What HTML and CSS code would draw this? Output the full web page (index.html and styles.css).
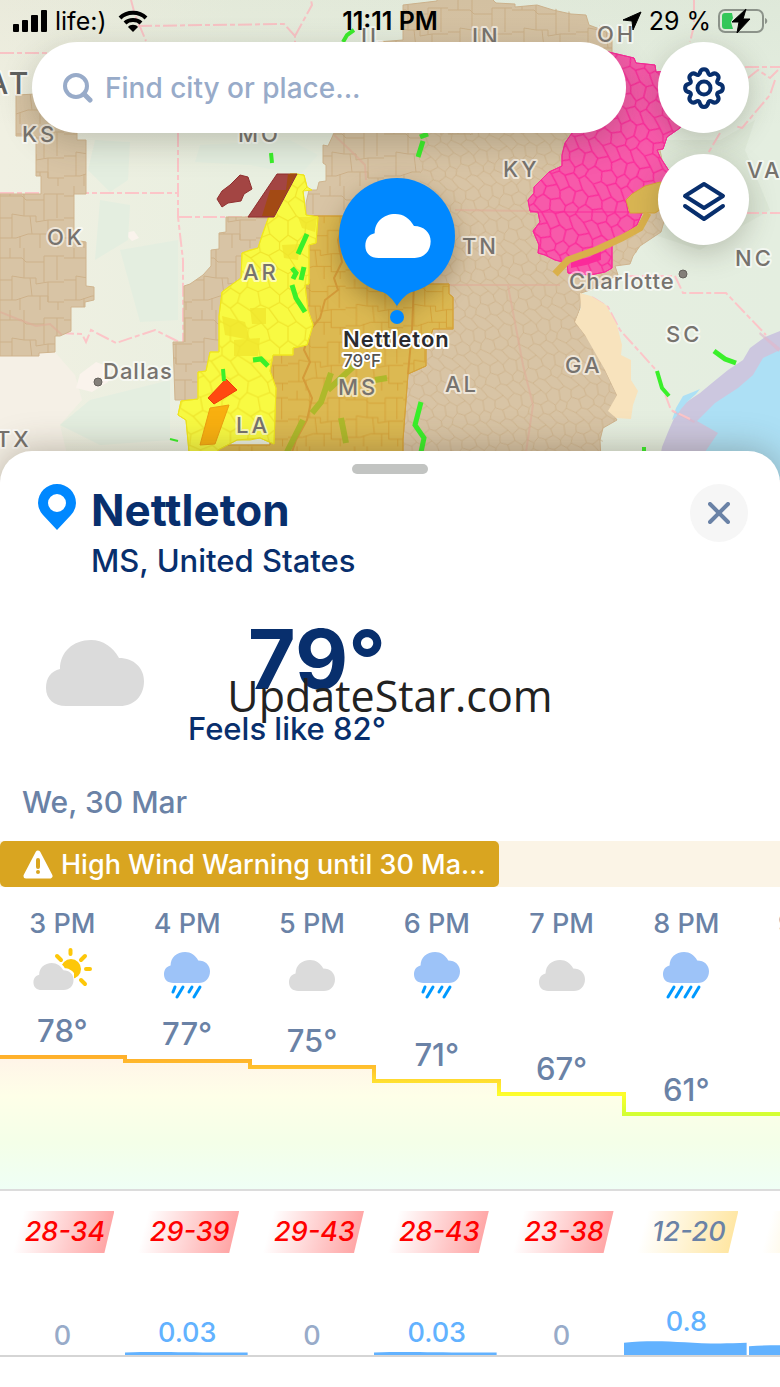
FILE: index.html
```html
<!DOCTYPE html>
<html lang="en">
<head>
    <meta charset="UTF-8">
    <meta name="viewport" content="width=device-width, initial-scale=1.0">
    <title>Nettleton Weather</title>
    <link rel="stylesheet" href="styles.css">
</head>
<body>
    <!-- Shared icon shapes -->
    <svg class="defs" aria-hidden="true">
        <symbol id="cloud" viewBox="0 0 98 66">
            <path d="M20 66C8 66 0 59 0 48C0 38 5 31 14 29C14 12 27 0 45 0C57 0 67 7 73 18C88 18 98 28 98 41C98 56 88 66 74 66Z"/>
        </symbol>
        <symbol id="cloudy" viewBox="0 0 64 54">
            <use href="#cloud" x="9" y="14" width="46" height="31" fill="#dbdbdb"/>
        </symbol>
        <symbol id="partly" viewBox="0 0 64 54">
            <circle cx="41" cy="23" r="10" fill="#fdc709"/>
            <path d="M40.500 4V8M27 10L31 14M55 10L51 14M56 23H60M51 34L55 38" stroke="#fdc709" stroke-width="4" stroke-linecap="round"/>
            <use href="#cloud" x="3" y="17" width="41" height="27" fill="#dbdbdb" stroke="#fff" stroke-width="12" paint-order="stroke"/>
        </symbol>
        <symbol id="rain" viewBox="0 0 64 54">
            <use href="#cloud" x="9" y="6" width="46" height="31" fill="#9dc3f8"/>
            <path d="M20 41L18 46M28 41L22 51M37 41L34 46M45 41L39 51" stroke="#0099ff" stroke-width="3" stroke-linecap="round"/>
        </symbol>
        <symbol id="heavy-rain" viewBox="0 0 64 54">
            <use href="#cloud" x="9" y="6" width="46" height="31" fill="#9dc3f8"/>
            <path d="M20 41L14 51M28 41L22 51M37 41L31 51M45 41L39 51" stroke="#0099ff" stroke-width="3" stroke-linecap="round"/>
        </symbol>
        <symbol id="rain-bar" viewBox="0 0 123 15" preserveAspectRatio="none">
            <path d="M0 2C45 -3 65 5 123 2V15H0Z"/>
        </symbol>
    </svg>

    <header class="map">
        <svg class="map-canvas" viewBox="0 0 780 480" preserveAspectRatio="xMidYMin slice" role="img" aria-label="Warnings map">
            <defs>
                <!-- County outlines, one tile shape and a colour per area -->
                <path id="cells" d="M0 8L7 4L15 10L26 5L31 11L40 4L48 8M0 20L8 25L14 19L23 23L33 19L41 26L48 20M0 37L6 32L17 39L25 34L32 37L41 32L48 37M15 10L14 19M31 11L33 19M0 8V20M48 8V20M8 25L6 32M23 23L25 34M41 26L41 32M17 39L26 49M17 -5L26 5M0 37L7 48M0 -7L7 4M32 37L40 48M32 -7L40 4" fill="none"/>
                <path id="grid" d="M0 10H22L26 14H44V8H64M0 32H12V28L24 30H36V36L48 34H64M0 52H16L28 48H48V54H64M10 0V10M24 0V30M44 14V34M57 8V32M12 32V52M30 30L32 48M48 34V54M20 50V62M40 48V62M58 54V62" fill="none"/>
                <pattern id="tan-cells" width="48" height="44" patternUnits="userSpaceOnUse" patternTransform="rotate(-8) scale(.8)"><use href="#cells" stroke="#cdb18a"/></pattern>
                <pattern id="yellow-cells" width="48" height="44" patternUnits="userSpaceOnUse" patternTransform="scale(1.200)"><use href="#cells" stroke="#efe52c"/></pattern>
                <pattern id="pink-cells" width="48" height="44" patternUnits="userSpaceOnUse" patternTransform="rotate(14) scale(.9)"><use href="#cells" stroke="#fb2a9a" stroke-width="1.500"/></pattern>
                <pattern id="tan-grid" width="64" height="62" patternUnits="userSpaceOnUse"><use href="#grid" stroke="#cdb18a"/></pattern>
                <pattern id="gold-grid" width="64" height="62" patternUnits="userSpaceOnUse" patternTransform="scale(.9)"><use href="#grid" stroke="#d5a136"/></pattern>
                <linearGradient id="land" x1="0" y1="0" x2="1" y2="0">
                    <stop offset="0" stop-color="#f0f0e2"/>
                    <stop offset=".3" stop-color="#e9efe0"/>
                    <stop offset="1" stop-color="#e4eee0"/>
                </linearGradient>
                <linearGradient id="top-shade" x1="0" y1="0" x2="0" y2="1">
                    <stop offset="0" stop-color="#5a6440" stop-opacity=".04"/>
                    <stop offset="1" stop-color="#5a6440" stop-opacity="0"/>
                </linearGradient>
            </defs>

            <rect width="780" height="480" fill="url(#land)"/>
            <path fill="#f5f0e6" d="M0 356L55 352L75 375L82 400L60 425L66 450V480H0Z"/>
            <path fill="#faf3ec" d="M80 374L96 362L112 368L108 382L92 392L76 388ZM124 233L134 231L139 238L132 241Z"/>
            <path fill="#e4eee0" d="M95 140L130 142L128 180L110 192L88 170ZM200 145L290 140L318 155L300 175L250 165L195 162ZM100 200L130 205L128 240L95 260ZM120 250L178 240V320L140 322ZM90 400L170 380V440L100 445L60 425Z"/>
            <path fill="#d9e5d2" d="M660 140L720 140L755 120L745 150L770 210L700 250L640 230Z" opacity=".6"/>

            <!-- Sea -->
            <path fill="#ccc7df" d="M780 331L765 337L750 348L743 360L728 370L712 383L700 393L685 403L675 416L668 432L662 447L656 480H780Z"/>
            <path fill="#ade0f5" d="M780 350L763 358L753 375L738 388L715 403L697 421L718 433L705 452L700 480H780Z"/>
            <path fill="#ade0f5" d="M683 396L693 392L700 389L696 394L687 402L681 409L676 417L672 420L676 408Z"/>
            <path fill="#e3b6ca" d="M780 348L760 332L759 334L779 352ZM695 421L672 410V412L694 423Z" opacity=".6"/>

            <!-- State borders -->
            <g fill="none" stroke="#fcc5c8" stroke-width="2" stroke-dasharray="14 3 5 3">
                <path d="M0 53H48M131 0L135 15L146 41M138 26L284 24L295 36V42M295 36L312 5L311 0M178 133V217L183 260V343M0 193H178M178 217H248"/>
                <path d="M60 333L82 334L86 342L91 330L116 343L155 330L183 344"/>
                <path d="M694 0V26L690 42M745 67H780M748 78L758 70L770 78L778 70M775 80L770 95L742 128L735 126M720 133L707 155M745 213H780"/>
                <path d="M592 297L608 307L620 330L656 370L671 410L690 419M625 276H675L683 293H726L766 335"/>
            </g>

            <!-- Advisory areas -->
            <g fill="#d8c4a5" stroke="#d0b48e">
                <path id="west" d="M16 95L77 92V140H86V194H74V240L86 242V286L94 287V300L85 302V307H71V331L60 336H55V352L39 353V356H0V194H41V176H36V136H16Z"/>
                <path id="middle" d="M226 217H280V400H175L173 342H184V286L190 284L203 275L211 266V250L219 249V233L226 232Z"/>
                <path d="M378 42L403 40V5L437 1V-2H491L496 3L515 4V7L537 5L553 10L571 14L586 15L589 25L597 28L612 35V55L650 100L670 200L661 232L640 246L633 256L630 264L615 266L618 275L590 290L581 293L580 308L575 322L585 335L597 350L605 370L612 385L617 395L610 410L617 420L603 428L600 440L602 480H390L306 240V203L309 190H317L319 182L326 181V165L323 163V145L328 146L334 133Z"/>
            </g>
            <g fill="url(#tan-grid)">
                <path d="M16 95L77 92V140H86V194H74V240L86 242V286L94 287V300L85 302V307H71V331L60 336H55V352L39 353V356H0V194H41V176H36V136H16Z"/>
                <path d="M226 217H280V400H175L173 342H184V286L190 284L203 275L211 266V250L219 249V233L226 232Z"/>
                <path d="M378 42L403 40V5L437 1V-2H491L515 4V7L537 5L586 15L612 35V60L480 135H420V200L306 215V203L309 190H317L319 182L326 181V165L323 163V145L334 133Z"/>
                <path fill="url(#tan-cells)" d="M420 135L650 100L661 232L640 246L630 264L615 266L618 275L590 290L581 293L575 322L597 350L617 395L610 410L617 420L603 428L602 480H390V210H420Z"/>
            </g>
            <path fill="none" stroke="#dfae98" stroke-width="2" opacity=".6" d="M455 210L530 211M440 285H560M508 286L523 365L533 405L526 452M334 135L350 150L365 165L366 180M0 312L20 320L36 326L50 324L62 335"/>

            <g stroke="#d6a33a">
                <path fill="#dcb952" d="M280 216H343L390 284H449V294L453 297V329H433L426 350V366L408 374L403 440V480H216V445H270V340Z"/>
                <path fill="url(#gold-grid)" d="M280 216H343L390 284H449V294L453 297V329H433L426 350V366L408 374L403 440V480H216V445H270V340Z"/>
            </g>
            <path fill="none" stroke="#d49b39" stroke-width="2" d="M344 222L338 240L342 262L334 278L338 290L325 300L320 318L310 330L304 350L310 362L303 378L312 398L307 420L296 440L292 452M414 284L412 330L408 374"/>

            <g stroke="#f0e51e">
                <path fill="#f8fa42" d="M290 174H296L304 175L307 187L312 190L303 191L306 215L318 217L316 243L309 245V284L305 285L308 310L313 325L307 345L293 348V355H273L270 371L276 388L274 444L260 438L250 440H237L218 450L217 480H189V452L186 420L178 415L181 401L198 399V372L206 371L210 352H219V316L222 292L227 288L241 278L242 253L250 250L258 248L262 235L268 219L278 195Z"/>
                <path fill="#f2ea31" stroke="none" d="M222 316L245 322L250 340L225 335ZM250 308H266V324H252ZM234 340L260 338L258 356H234ZM282 245L300 244L298 260L284 258ZM298 217H317L315 232L302 228Z"/>
                <path fill="url(#yellow-cells)" d="M290 174H296L304 175L307 187L303 191L306 215L318 217L316 243L309 245V284L305 285L308 310L313 325L307 345L293 348V355H273L270 371L276 388L274 444L260 438L237 440L218 450L217 480H189V452L186 420L178 415L181 401L198 399V372L206 371L210 352H219V316L222 292L241 278L242 253L258 248L268 219L278 195Z"/>
            </g>

            <g stroke="#fb2a9a">
                <path fill="#f75aaa" d="M600 50L634 58L636 63L655 65L656 72L668 71L690 100L680 128L667 137L663 149L657 150L660 157L675 180L640 190L626 200L628 212L642 213L637 225L612 242V268L605 272L590 275L568 273L567 263L555 260L545 255L538 253L539 245L533 231L540 222L538 212L530 211L528 200L534 193V187L549 172L562 166V155L565 143L572 133L600 120Z"/>
                <path fill="url(#pink-cells)" d="M600 50L634 58L636 63L655 65L656 72L668 71L690 100L680 128L667 137L663 149L657 150L660 157L675 180L640 190L626 200L628 212L642 213L637 225L612 242V268L605 272L590 275L568 273L567 263L555 260L545 255L538 253L539 245L533 231L540 222L538 212L530 211L528 200L534 193V187L549 172L562 166V155L565 143L572 133L600 120Z"/>
                <path fill="none" d="M530 212H628"/>
                <path fill="#fb2a9a" stroke="none" d="M571 262L590 257L601 250V260L586 265L571 268Z"/>
            </g>
            <path fill="#d8b553" stroke="#d9a438" d="M626 200L632 194L645 186L660 182L675 185V200L655 213H630Z"/>
            <path fill="none" stroke="#dab04a" stroke-width="7" d="M555 274L568 260L596 250L622 238L640 228L648 213"/>
            <path fill="#f8e3bd" d="M580 293L591 296L606 305L617 325L622 345L621 355L631 360V380L638 391L633 405L631 419L616 418L608 411L617 395L605 370L585 335L575 322L581 308Z"/>

            <path fill="#a34543" stroke="#8f2f2f" d="M240 175L248 177L252 189L244 194L241 201L228 203L222 207L217 199L222 191L230 185L238 177ZM277 174H297L274 217H248Z"/>
            <path fill="#a34a14" d="M288 174H296L274 216H262L270 190H286Z"/>
            <path fill="#ff4a10" stroke="#f03a08" d="M226 379L237 390L214 404L208 398Z"/>
            <path fill="#f9b010" stroke="#ee9f10" d="M210 408L229 405L215 444L200 445Z"/>

            <g fill="none" stroke="#3af02a" stroke-width="5">
                <path d="M307 234L298 254M292 268L296 273L293 279M304 267L301 280M292 285L296 298L305 312M253 360L261 359L268 366M421 402L415 425L424 438L421 452M423 141L418 157M420 137L428 134M714 351L725 359L736 363"/>
                <path stroke-width="4" d="M223 369L224 381M271 153L272 163M343 42L347 35L354 30M657 371L662 388L669 396M644 447V455"/>
                <path stroke-width="2" d="M170 439L178 441"/>
            </g>
            <path fill="none" stroke="#aeb92b" stroke-width="6" d="M331 373L321 402L312 413M354 366L328 390M303 420L287 452M341 418L346 443M375 380L387 378"/>
            <rect width="780" height="130" fill="url(#top-shade)"/>

            <g class="map-label">
                <text class="country" x="-13" y="94">AT</text>
                <text x="22" y="142">KS</text>
                <text x="238" y="142">MO</text>
                <text x="361" y="44">IL</text>
                <text x="472" y="44">IN</text>
                <text x="597" y="42">OH</text>
                <text x="503" y="177">KY</text>
                <text x="747" y="178">VA</text>
                <text x="47" y="245">OK</text>
                <text x="243" y="280">AR</text>
                <text x="462" y="254">TN</text>
                <text x="735" y="266">NC</text>
                <text x="666" y="342">SC</text>
                <text x="565" y="373">GA</text>
                <text x="445" y="392">AL</text>
                <text x="338" y="395">MS</text>
                <text x="236" y="433">LA</text>
                <text x="-4" y="447">TX</text>
                <text class="town" x="103" y="379">Dallas</text>
                <text class="town" x="569" y="289">Charlotte</text>
            </g>
            <g fill="#85807a" stroke="#66625d">
                <circle cx="98" cy="382" r="4"/>
                <circle cx="683" cy="274" r="4"/>
            </g>

            <!-- Selected place -->
            <g class="map-pin">
                <circle cx="397" cy="236" r="58"/>
                <path d="M378 290C388 293 393 300 397 306C401 300 406 293 416 290Z"/>
                <circle cx="397" cy="317" r="7"/>
                <use href="#cloud" x="365" y="214" width="66" height="44" fill="#fff"/>
            </g>
            <text class="pin-name" x="343" y="347">Nettleton</text>
            <text class="pin-temp" x="343" y="367">79°F</text>
        </svg>

        <div class="status-bar">
            <div class="status-left">
                <svg width="36" height="22" viewBox="0 0 36 22">
                    <path d="M2 15H6V21H2ZM11 11H15V21H11ZM20 6H25V21H20ZM30 1H34V21H30Z" stroke="#000" stroke-width="2" stroke-linejoin="round"/>
                </svg>
                <span>life:)</span>
                <svg class="wifi" width="30" height="23" viewBox="0 0 30 23">
                    <path d="M2 8C9 1 21 1 28 8M7 13C11 9 19 9 23 13" fill="none" stroke="#000" stroke-width="4"/>
                    <path d="M15 22L10 17C12 14 18 14 20 17Z"/>
                </svg>
            </div>
            <time class="clock">11:11 PM</time>
            <div class="status-right">
                <svg width="20" height="20" viewBox="0 0 20 20"><path d="M19 1L1 9L10 10L11 19Z" stroke="#000" stroke-linejoin="round"/></svg>
                <span>29 %</span>
                <svg width="50" height="26" viewBox="0 0 50 26">
                    <rect x="1" y="2" width="44" height="22" rx="6" fill="none" stroke="#8c938a" stroke-width="2"/>
                    <path d="M47 10C50 11 50 15 47 16Z" fill="#8c938a"/>
                    <path d="M7 5H14L15 10L13 14L15 21H7Q4 21 4 18V8Q4 5 7 5Z" fill="#34c759"/>
                    <path d="M28 1L14 14H21L19 25L32 11H25Z" stroke="#000" stroke-linejoin="round"/>
                </svg>
            </div>
        </div>

        <div class="controls">
            <form class="search">
                <svg width="30" height="30" viewBox="0 0 30 30" fill="none" stroke="#98abc9" stroke-width="4" stroke-linecap="round">
                    <circle cx="13" cy="13" r="11"/>
                    <path d="M21 21L27 27" stroke-width="5"/>
                </svg>
                <input type="text" placeholder="Find city or place..." aria-label="Find city or place">
            </form>
            <div class="map-buttons">
                <button class="round-btn" type="button" aria-label="Settings">
                    <svg width="44" height="44" viewBox="-22 -22 44 44" fill="none" stroke="#082f6d" stroke-width="4" stroke-linecap="round">
                        <circle r="6.500"/>
                        <path id="cog" d="M-4 -15.500C-3 -20 3 -20 4 -15.500C4.600 -13 5.900 -12.400 8.100 -13.800C12 -16.300 16.300 -12 13.800 -8.100C12.400 -5.900 13 -4.600 15.500 -4"/>
                        <use href="#cog" transform="rotate(90)"/>
                        <use href="#cog" transform="rotate(180)"/>
                        <use href="#cog" transform="rotate(270)"/>
                    </svg>
                </button>
                <button class="round-btn" type="button" aria-label="Map layers">
                    <svg width="44" height="44" viewBox="0 0 44 44" fill="none" stroke="#082f6d" stroke-width="4" stroke-linecap="round" stroke-linejoin="round">
                        <path d="M22 6L41 18L22 30L3 18ZM3 28L22 41L41 28"/>
                    </svg>
                </button>
            </div>
        </div>
    </header>

    <main class="sheet">
        <div class="handle"></div>

        <section class="place">
            <svg width="38" height="46" viewBox="0 0 38 46">
                <path fill="#0088ff" fill-rule="evenodd" d="M19 46L5 31A19 19 0 0 1 0 19A19 19 0 0 1 38 19A19 19 0 0 1 33 31ZM19 10A9 9 0 0 0 19 28A9 9 0 0 0 19 10Z"/>
            </svg>
            <div class="place-text">
                <h1>Nettleton</h1>
                <p>MS, United States</p>
            </div>
            <button class="close-btn" type="button" aria-label="Close">
                <svg width="22" height="22" viewBox="0 0 22 22" stroke="#6a82a6" stroke-width="4" stroke-linecap="round"><path d="M2 2L20 20M20 2L2 20"/></svg>
            </button>
        </section>

        <section class="now">
            <svg class="now-icon" width="98" height="66" fill="#dbdbdb"><use href="#cloud"/></svg>
            <div class="now-text">
                <p class="now-temp">79°</p>
                <p class="now-feels">Feels like 82°</p>
            </div>
            <span class="watermark">UpdateStar.com</span>
        </section>

        <h2 class="date">We, 30 Mar</h2>

        <div class="alert-track">
            <a class="alert" href="#">
                <svg width="30" height="29" viewBox="0 0 30 29">
                    <path d="M15 3L27 26H3Z" fill="#fff" stroke="#fff" stroke-width="5" stroke-linejoin="round"/>
                    <path d="M15 10V17M15 22V22" stroke="#d9a520" stroke-width="4" stroke-linecap="round"/>
                </svg>
                <span>High Wind Warning until 30 Ma...</span>
            </a>
        </div>

        <section class="hourly">
            <div class="row hours">
                <span>3 PM</span><span>4 PM</span><span>5 PM</span><span>6 PM</span><span>7 PM</span><span>8 PM</span><span>9 PM</span>
            </div>

            <div class="row icons">
                <svg><use href="#partly"/></svg>
                <svg><use href="#rain"/></svg>
                <svg><use href="#cloudy"/></svg>
                <svg><use href="#rain"/></svg>
                <svg><use href="#cloudy"/></svg>
                <svg><use href="#heavy-rain"/></svg>
            </div>

            <div class="chart">
                <svg class="chart-line" viewBox="0 0 780 189" preserveAspectRatio="none">
                    <defs>
                        <linearGradient id="temp-line" gradientUnits="userSpaceOnUse" x1="0" y1="57" x2="0" y2="114">
                            <stop offset="0" stop-color="#ffb02b"/>
                            <stop offset=".18" stop-color="#ffc02d"/>
                            <stop offset=".41" stop-color="#ffdc30"/>
                            <stop offset=".66" stop-color="#fdff2b"/>
                            <stop offset="1" stop-color="#d3ff33"/>
                        </linearGradient>
                        <linearGradient id="temp-fill" gradientUnits="userSpaceOnUse" x1="0" y1="57" x2="0" y2="189">
                            <stop offset="0" stop-color="#fff4e8"/>
                            <stop offset=".3" stop-color="#feffe8"/>
                            <stop offset=".65" stop-color="#f4ffe8"/>
                            <stop offset="1" stop-color="#effff5"/>
                        </linearGradient>
                    </defs>
                    <path fill="url(#temp-fill)" d="M0 57H125V61H250V67H374V81H499V94H624V114H780V189H0Z"/>
                    <path fill="none" stroke="url(#temp-line)" stroke-width="4" d="M-4 57H125V61H250V67H374V81H499V94H624V114H784"/>
                </svg>
                <div class="row temps">
                    <span style="padding-top: 13px">78°</span>
                    <span style="padding-top: 16px">77°</span>
                    <span style="padding-top: 23px">75°</span>
                    <span style="padding-top: 37px">71°</span>
                    <span style="padding-top: 51px">67°</span>
                    <span style="padding-top: 72px">61°</span>
                </div>
            </div>

            <div class="row wind">
                <span class="gust strong">28-34</span>
                <span class="gust strong">29-39</span>
                <span class="gust strong">29-43</span>
                <span class="gust strong">28-43</span>
                <span class="gust strong">23-38</span>
                <span class="gust">12-20</span>
                <span class="gust">12-19</span>
            </div>

            <div class="row precip">
                <div><span>0</span></div>
                <div class="wet"><span>0.03</span><svg style="height: 3px"><use href="#rain-bar"/></svg></div>
                <div><span>0</span></div>
                <div class="wet"><span>0.03</span><svg style="height: 3px"><use href="#rain-bar"/></svg></div>
                <div><span>0</span></div>
                <div class="wet"><span>0.8</span><svg style="height: 14px"><use href="#rain-bar"/></svg></div>
                <div class="wet"><svg style="height: 10px"><use href="#rain-bar"/></svg></div>
            </div>
        </section>
    </main>
</body>
</html>
```
FILE: styles.css
```css
/* Global Styles */
* {
    box-sizing: border-box;
}

body {
    font-family: Inter, "Liberation Sans", sans-serif;
    font-weight: 500;
    margin: 0;
    background-color: #fff;
    color: #6a82a6;
    overflow-x: hidden;
}

h1, h2, p {
    margin: 0;
}

svg {
    display: block;
    flex-shrink: 0;
}

button {
    border: none;
    padding: 0;
    cursor: pointer;
}

.defs {
    position: absolute;
    width: 0;
    height: 0;
}

/* Map */
.map {
    position: relative;
    height: 480px;
    overflow: hidden;
}

.map-canvas {
    position: absolute;
    top: 0;
    left: 0;
    width: 100%;
    height: 100%;
}

.map-label text,
.pin-name,
.pin-temp {
    paint-order: stroke;
    stroke: rgba(255, 255, 255, 0.6);
    stroke-width: 4px;
    stroke-linejoin: round;
}

.map-label {
    fill: #77736e;
    font-size: 22px;
    font-weight: 500;
    letter-spacing: 3px;
}

.map-label .country {
    fill: #5f6060;
    font-size: 30px;
}

.map-label .town {
    letter-spacing: 1px;
}

.map-pin {
    fill: #0088ff;
    filter: drop-shadow(0 10px 12px rgba(60, 40, 0, 0.35));
}

.pin-name,
.pin-temp {
    fill: #2b2b2e;
    stroke: #fff;
}

.pin-name {
    font-size: 22px;
    font-weight: 600;
    letter-spacing: 1px;
}

.pin-temp {
    font-size: 17px;
    fill: #55534f;
}

/* Status bar */
.status-bar {
    position: relative;
    display: grid;
    grid-template-columns: 1fr auto 1fr;
    align-items: center;
    height: 42px;
    padding: 0 12px;
    color: #000;
    font-size: 25px;
    font-weight: 400;
}

.status-left,
.status-right {
    display: flex;
    align-items: center;
    gap: 7px;
}

.status-right {
    justify-content: flex-end;
}

.wifi {
    margin-left: 4px;
}

.clock {
    font-weight: 600;
}

/* Search and map buttons */
.controls {
    position: relative;
    display: flex;
    align-items: flex-start;
    gap: 32px;
    padding: 0 31px 0 32px;
}

.search {
    flex: 1;
    display: flex;
    align-items: center;
    gap: 12px;
    height: 91px;
    padding: 0 31px;
    background-color: #fff;
    border-radius: 46px;
    box-shadow: 0 10px 32px rgba(60, 60, 40, 0.25);
}

.search input {
    flex: 1;
    min-width: 0;
    padding: 0;
    border: none;
    outline: none;
    background: none;
    font: inherit;
    font-size: 28px;
    color: #082f6d;
}

.search input::placeholder {
    color: #98abc9;
    opacity: 1;
}

.map-buttons {
    display: flex;
    flex-direction: column;
    gap: 21px;
}

.round-btn {
    display: grid;
    place-items: center;
    width: 91px;
    height: 91px;
    background-color: #fff;
    border-radius: 50%;
    box-shadow: 0 8px 28px rgba(60, 60, 40, 0.25);
}

/* Bottom sheet */
.sheet {
    position: relative;
    margin-top: -29px;
    padding: 13px 0 30px;
    background-color: #fff;
    border-radius: 32px 32px 0 0;
    box-shadow: 0 0 36px rgba(60, 50, 30, 0.35);
}

.handle {
    width: 76px;
    height: 10px;
    margin: 0 auto 10px;
    border-radius: 5px;
    background-color: #c2c4c2;
}

.place {
    display: flex;
    align-items: flex-start;
    gap: 15px;
    padding: 0 32px 0 38px;
    color: #082f6d;
}

.place-text {
    flex: 1;
}

.place h1 {
    font-size: 44px;
    font-weight: 700;
    line-height: 52px;
}

.place p {
    margin-top: 7px;
    font-size: 31px;
    line-height: 36px;
}

.close-btn {
    display: grid;
    place-items: center;
    width: 58px;
    height: 58px;
    border-radius: 50%;
    background-color: #f6f6f6;
}

/* Current weather */
.now {
    position: relative;
    display: flex;
    align-items: flex-start;
    gap: 44px;
    margin-top: 43px;
    padding-left: 46px;
    color: #082f6d;
}

.now-icon {
    margin-top: 18px;
}

.now-text {
    text-align: right;
}

.now-temp {
    font-size: 82px;
    font-weight: 700;
    line-height: 76px;
}

.now-feels {
    margin-top: 13px;
    font-size: 31px;
    line-height: 36px;
}

.watermark {
    position: absolute;
    top: 44px;
    left: 0;
    right: 0;
    text-align: center;
    color: #222;
    font-family: "Open Sans", "Noto Sans", sans-serif;
    font-size: 43px;
    font-weight: 400;
    line-height: 60px;
    pointer-events: none;
}

.date {
    margin-top: 37px;
    padding-left: 22px;
    font-size: 30px;
    font-weight: 500;
    line-height: 36px;
}

/* Warning */
.alert-track {
    margin-top: 21px;
    background-color: #fbf4e6;
}

.alert {
    display: flex;
    align-items: center;
    gap: 8px;
    width: 64%;
    height: 46px;
    padding: 0 12px 0 23px;
    border-radius: 5px;
    background-color: #d9a520;
    color: #fff;
    font-size: 27px;
    text-decoration: none;
    white-space: nowrap;
}

/* Hourly forecast */
.hourly {
    overflow: hidden;
}

.row {
    display: grid;
    grid-template-columns: repeat(7, 16%);
    justify-items: center;
    text-align: center;
}

.hours {
    margin-top: 19px;
    font-size: 27px;
    line-height: 36px;
}

.icons {
    margin-top: 4px;
}

.icons svg {
    width: 64px;
    height: 54px;
}

.chart {
    display: grid;
    border-bottom: 2px solid #dcdcdc;
}

.chart-line,
.temps {
    grid-area: 1 / 1;
    width: 100%;
}

.chart-line {
    height: 189px;
}

.temps {
    font-size: 31px;
    line-height: 36px;
}

.wind {
    margin-top: 20px;
}

.gust {
    width: 104px;
    padding-left: 5px;
    background: linear-gradient(105deg, transparent 12%, #ffe49a);
    clip-path: polygon(10px 0, 100% 0, calc(100% - 10px) 100%, 0 100%);
    font-size: 27px;
    font-style: italic;
    line-height: 42px;
}

.gust.strong {
    background: linear-gradient(105deg, transparent 12%, #ff9c9c);
    color: #f00;
}

.precip {
    height: 104px;
    align-items: end;
    justify-items: stretch;
    border-bottom: 2px solid #d5d5d5;
    color: #98abc9;
    font-size: 27px;
    line-height: 32px;
}

.precip span {
    display: block;
    margin-bottom: 3px;
}

.precip svg {
    width: calc(100% - 2px);
    fill: #62b2ff;
}

.wet {
    color: #62b2ff;
}
```
